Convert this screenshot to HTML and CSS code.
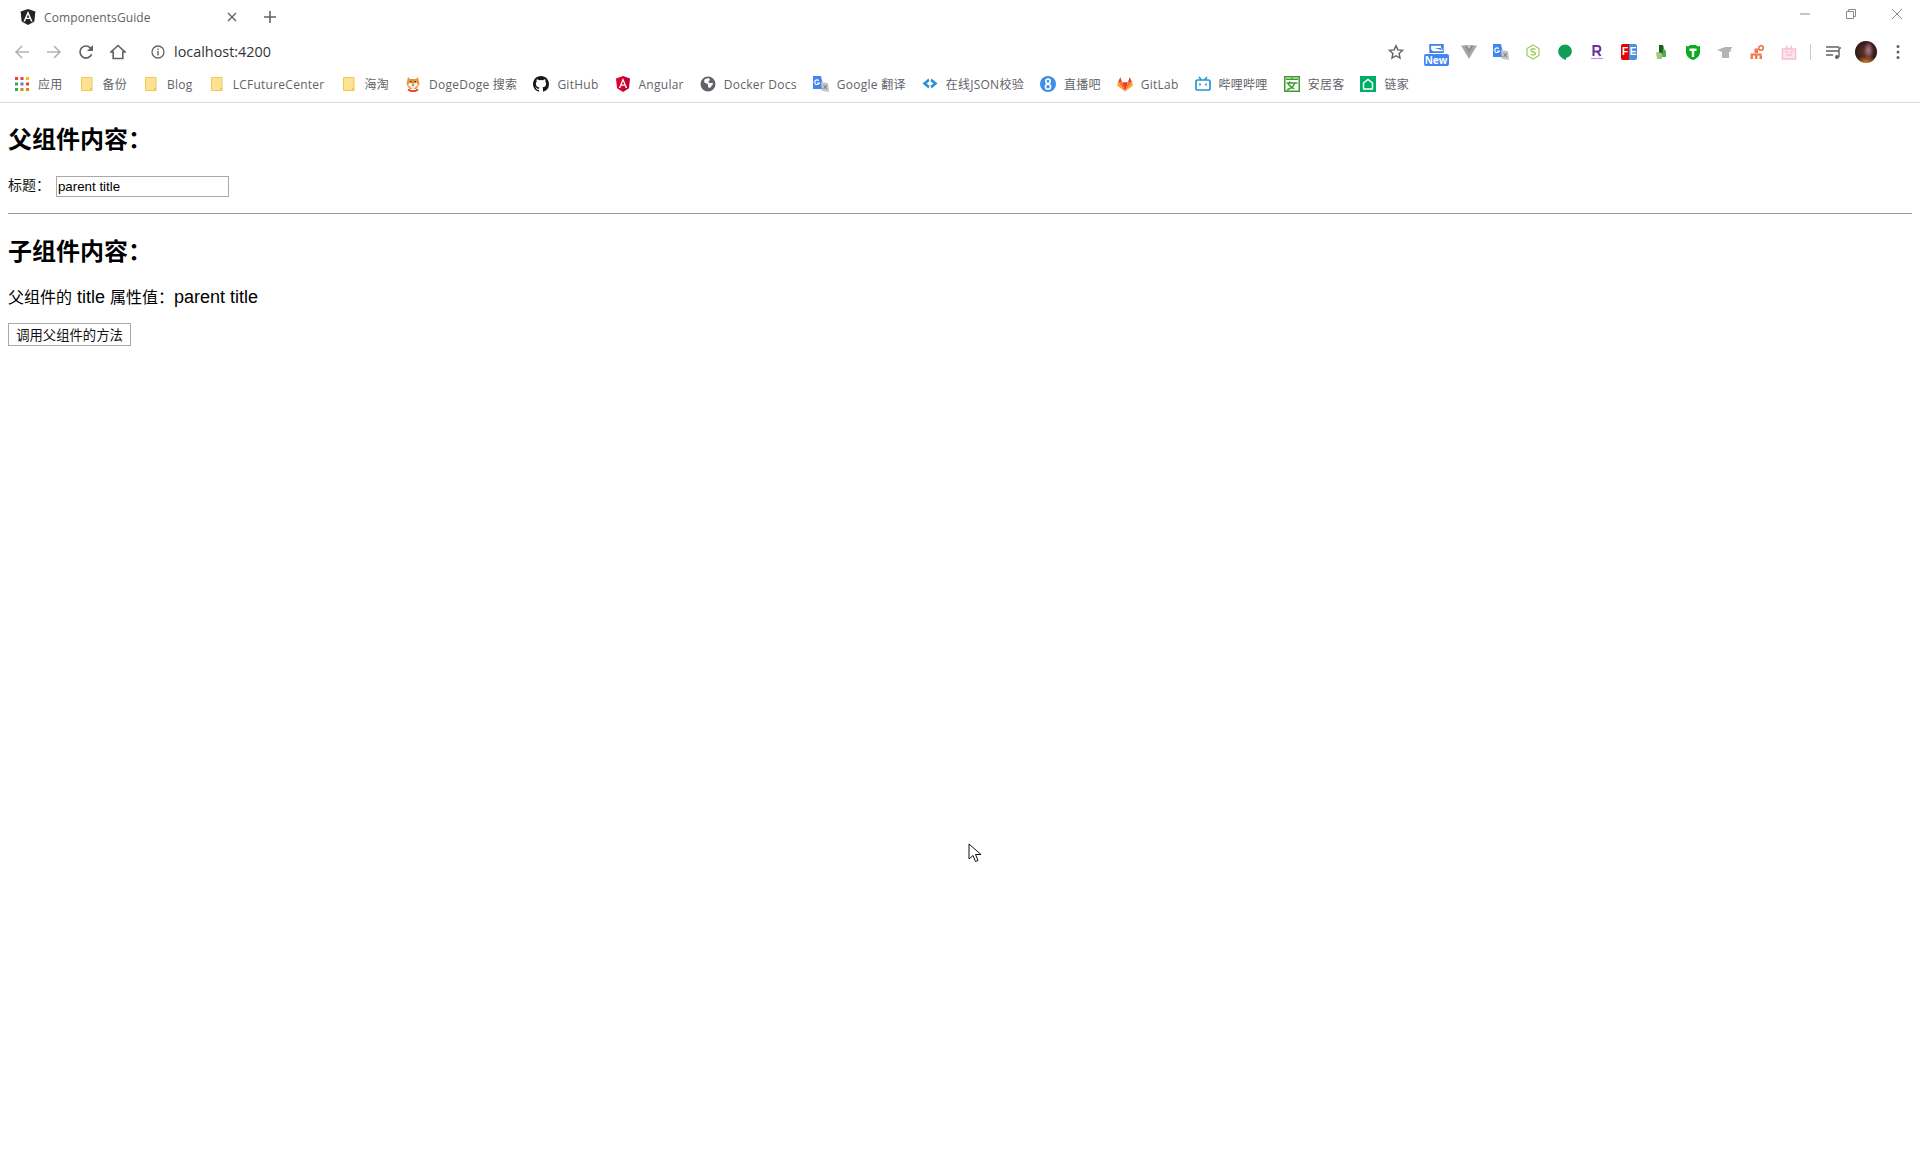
FILE: index.html
```html
<!DOCTYPE html>
<html lang="zh">
<head>
<meta charset="utf-8">
<title>ComponentsGuide</title>
<link rel="stylesheet" href="styles.css">
</head>
<body>
<header class="chrome">
  <div class="tabstrip">
    <div class="tab">
      <svg class="fav" viewBox="0 0 16 16"><path fill="#212327" d="M8 0 .6 2.600l1.100 9.800L8 16l6.300-3.600 1.100-9.800z"/><path fill="#fff" d="M8 2 3.400 12.400h1.700l.9-2.300h4l.9 2.300h1.700zm-1.300 6.700L8 5.500l1.300 3.200z"/></svg>
      <span class="tab-title">ComponentsGuide</span>
      <svg class="tab-close" viewBox="0 0 10 10"><path d="m1 1 8 8M9 1 1 9" stroke="#5f6368" stroke-width="1.400" fill="none"/></svg>
    </div>
    <svg class="newtab" viewBox="0 0 12 12"><path d="M6 0v12M0 6h12" stroke="#5f6368" stroke-width="1.600"/></svg>
    <div class="win">
      <svg viewBox="0 0 10 10"><path d="M0 5h10" stroke="#8a8a8a"/></svg>
      <svg viewBox="0 0 10 10"><path d="M.5 2.500h7v7h-7zM2.500 2.500v-2h7v7h-2" stroke="#8a8a8a" fill="none"/></svg>
      <svg viewBox="0 0 10 10"><path d="m0 0 10 10M10 0 0 10" stroke="#8a8a8a" fill="none"/></svg>
    </div>
  </div>
  <div class="omnibar">
    <svg class="nav" viewBox="0 0 16 16"><path d="M15 8H2M8 2 2 8l6 6" stroke="#b1b3b6" stroke-width="1.600" fill="none"/></svg>
    <svg class="nav" viewBox="0 0 16 16"><path d="M1 8h13M8 2l6 6-6 6" stroke="#b1b3b6" stroke-width="1.600" fill="none"/></svg>
    <svg class="nav" viewBox="0 0 16 16"><path d="M13.600 10.200A6 6 0 1 1 12.300 3.800L14.500 6" stroke="#5f6368" stroke-width="1.700" fill="none"/><path d="M15 1v6H9z" fill="#5f6368"/></svg>
    <svg class="nav" viewBox="0 0 16 16"><path d="M8 1.500 1 8h2.200v6.500h9.600V8H15z" stroke="#5f6368" stroke-width="1.600" fill="none"/></svg>
    <svg class="info" viewBox="0 0 14 14"><circle cx="7" cy="7" r="6" stroke="#5f6368" stroke-width="1.300" fill="none"/><path d="M7 6v4.500M7 3.500v1.500" stroke="#5f6368" stroke-width="1.400"/></svg>
    <span class="url">localhost:4200</span>
    <div class="ext-row">
      <svg class="star" viewBox="0 0 16 16"><path d="m8 1.700 1.900 4.200 4.600.5-3.400 3.100.9 4.500-4-2.300-4 2.300.9-4.500-3.400-3.100 4.600-.5z" stroke="#5f6368" stroke-width="1.400" fill="none"/></svg>
      <span class="ext-new"><svg class="ext-new-top" viewBox="0 0 16 10"><path fill="#3d82e0" d="M0 0h16v10H0z"/><path fill="#fff" d="M2 2h11v1.500L15 7v1H4L2 6z"/><path fill="#3d82e0" d="M6 4.500h7l1 2.500z"/></svg><span class="ext-new-label">New</span></span>
      <svg class="ext" viewBox="0 0 16 16"><path fill="#a6a6a6" d="M0 1.500h16L8 15z"/><path fill="#8c8c8c" d="M3.500 1.500h9L8 9z"/><path fill="#cfcfcf" d="M6 1.500h4L8 5z"/></svg>
      <svg class="ext" viewBox="0 0 16 16"><use href="#gt"/></svg>
      <svg class="ext" viewBox="0 0 16 16"><path d="M8 1 14 4.500v7L8 15l-6-3.500v-7z" stroke="#9ccc65" stroke-width="1.200" fill="#fdfff8"/><path d="M10.500 5.500C9 4.600 6 4.700 6 6.300c0 2 4.500 1.200 4.500 3.300 0 1.600-3 1.700-4.500.8" stroke="#8bc34a" stroke-width="1.200" fill="none"/></svg>
      <svg class="ext" viewBox="0 0 16 16"><path fill="#0f9d58" d="M8 .5a6.800 6.800 0 0 1 6.800 6.800c0 3.400-2.500 6-5.800 6.600V16C5 15 1.200 11.500 1.200 7.300A6.800 6.800 0 0 1 8 .5z"/></svg>
      <svg class="ext" viewBox="0 0 16 16"><path d="M4.500 12V2h4a2.800 2.800 0 0 1 0 5.600h-4M8.500 7.600l3 4.400" stroke="#6a2c9e" stroke-width="2" fill="none"/><path d="M2 14.500h12" stroke="#b99ad6" stroke-width="1.200"/></svg>
      <span class="ext-fe"><span class="ext-fe-f">F</span><span class="ext-fe-e">E</span></span>
      <svg class="ext" viewBox="0 0 16 16"><path fill="#1b5e20" d="M6 1h4l1 4v6H6z"/><path fill="#4caf50" d="M10 4l3 3v6H9z"/><path fill="#a5c77a" d="M3 8l6 1v6H4z"/></svg>
      <svg class="ext" viewBox="0 0 16 16"><path fill="#0bab1e" d="M1 2c2 .5 3 .5 4-1h6c1 1.500 2 1.500 4 1v6c0 4-3 6.500-7 8-4-1.500-7-4-7-8z"/><path fill="#fff" d="M4.500 4.500h7V7H9.200v6H6.800V7H4.500z"/></svg>
      <svg class="ext" viewBox="0 0 16 16"><path fill="#b4b4b4" d="M0 6 8 3h7v1l-2 2 2 1-3 1v6H5V8z"/></svg>
      <svg class="ext" viewBox="0 0 16 16"><circle cx="12" cy="4" r="2.300" stroke="#ea5a2c" stroke-width="1.300" fill="none"/><path fill="#f07a4a" d="M5.500 4.500h3.500v4.500H5.500zM1.500 9.500h11v2h-11zM1.500 11.500h2.500v3.500H1.500zM6 11.500h2.500v3.500H6zM10.500 11.500H13v3.500h-2.500z"/></svg>
      <svg class="ext" viewBox="0 0 16 16"><path d="M1.500 5h13v10h-13zM5 1.500 7 5M11 1.500 9 5" stroke="#f7bccb" stroke-width="1.400" fill="#fde7ec"/><path d="M4 8h3M9 8h3M5 11h6" stroke="#f7bccb" stroke-width="1.400"/></svg>
      <span class="sep"></span>
      <svg class="media" viewBox="0 0 16 14"><path d="M0 2h13M0 6h13M0 10h7" stroke="#5f6368" stroke-width="1.500"/><circle cx="11" cy="12" r="2" fill="#5f6368"/><path d="M13 12V3h2" stroke="#5f6368" stroke-width="1.400" fill="none"/></svg>
      <span class="avatar"></span>
      <svg class="more" viewBox="0 0 4 16"><circle cx="2" cy="2.500" r="1.500" fill="#5f6368"/><circle cx="2" cy="8" r="1.500" fill="#5f6368"/><circle cx="2" cy="13.500" r="1.500" fill="#5f6368"/></svg>
    </div>
  </div>
  <nav class="bookmarks">
    <a class="bm"><svg class="bm-icon" viewBox="-1 -1 16 16"><path fill="#ea4335" d="M0 0h3v3H0zM5.500 0h3v3h-3z"/><path fill="#fbbc05" d="M11 0h3v3h-3z"/><path fill="#34a853" d="M0 5.500h3v3H0z"/><path fill="#4285f4" d="M5.500 5.500h3v3h-3z"/><path fill="#ea4335" d="M11 5.500h3v3h-3z"/><path fill="#34a853" d="M0 11h3v3H0z"/><path fill="#d98c00" d="M5.500 11h3v3h-3zM11 11h3v3h-3z"/></svg>应用</a>
    <a class="bm"><svg class="bm-icon" viewBox="0 0 16 16"><use href="#folder"/></svg>备份</a>
    <a class="bm"><svg class="bm-icon" viewBox="0 0 16 16"><use href="#folder"/></svg>Blog</a>
    <a class="bm"><svg class="bm-icon" viewBox="0 0 16 16"><use href="#folder"/></svg>LCFutureCenter</a>
    <a class="bm"><svg class="bm-icon" viewBox="0 0 16 16"><use href="#folder"/></svg>海淘</a>
    <a class="bm"><svg class="bm-icon" viewBox="0 0 16 16"><path fill="#e8963c" d="M3 1l2 2h6l2-2 1.500 7-3 5h-7l-3-5z"/><path fill="#fff3e0" d="M4.500 6.500 8 8l3.500-1.500L13 9l-5 4.500L3 9z"/><path fill="#222" d="M5.200 5h1.300v1.300H5.200zM9.500 5h1.300v1.300H9.500zM7.300 8.500h1.400v1.200H7.300z"/><path stroke="#e33" stroke-width="1.800" d="M3 13.500c3 2 7 2 10 0" fill="none"/></svg>DogeDoge 搜索</a>
    <a class="bm"><svg class="bm-icon" viewBox="0 0 16 16"><path fill="#181717" d="M8 0C3.580 0 0 3.580 0 8c0 3.540 2.290 6.530 5.470 7.590.4.070.55-.17.550-.38v-1.340c-2.230.48-2.700-1.070-2.700-1.070-.36-.92-.89-1.170-.89-1.170-.73-.5.050-.49.050-.49.800.06 1.230.82 1.230.82.710 1.220 1.870.87 2.330.66.070-.52.280-.87.510-1.070-1.780-.2-3.640-.89-3.640-3.950 0-.87.310-1.590.82-2.150-.08-.2-.36-1.020.08-2.120 0 0 .67-.21 2.200.82a7.600 7.600 0 0 1 4 0c1.530-1.040 2.200-.82 2.200-.82.440 1.100.16 1.920.08 2.120.51.560.82 1.270.82 2.150 0 3.070-1.870 3.750-3.650 3.950.29.250.54.730.54 1.480v2.200c0 .21.150.46.550.38A8 8 0 0 0 16 8c0-4.420-3.580-8-8-8z"/></svg>GitHub</a>
    <a class="bm"><svg class="bm-icon" viewBox="0 0 16 16"><path fill="#dd0031" d="M8 0 1 2.500l1 9.700L8 16z"/><path fill="#c3002f" d="m8 0 7 2.500-1 9.700L8 16z"/><path fill="#fff" d="M8 2 3.800 12h1.600l.8-2.200h3.600l.8 2.200h1.600zm-1.300 6.500L8 5.300l1.300 3.200z"/></svg>Angular</a>
    <a class="bm"><svg class="bm-icon" viewBox="0 0 16 16"><circle cx="8" cy="8" r="7.500" fill="#5f6368"/><path fill="#fff" d="M5 3l4-1 1 2-2 2 2 1 3 0 0 1-3 4-2-1 0-3-3-1-1-2z"/></svg>Docker Docs</a>
    <a class="bm"><svg class="bm-icon" viewBox="0 0 16 16"><use href="#gt"/></svg>Google 翻译</a>
    <a class="bm"><svg class="bm-icon" viewBox="0 0 16 16"><path d="M6.500 2.500.5 7.500l6 5 1-2.800-3-2.200 3-2.200zM9.500 2.500l6 5-6 5-1-2.800 3-2.200-3-2.200z" fill="#2d8fd5"/></svg>在线JSON校验</a>
    <a class="bm"><svg class="bm-icon" viewBox="0 0 16 16"><circle cx="8" cy="8" r="8" fill="#3d8fe8"/><circle cx="8" cy="5.300" r="2.200" stroke="#fff" stroke-width="1.600" fill="none"/><circle cx="8" cy="10.700" r="2.500" stroke="#fff" stroke-width="1.600" fill="none"/></svg>直播吧</a>
    <a class="bm"><svg class="bm-icon" viewBox="0 0 16 16"><path fill="#e24329" d="m8 15.500-3-9.300h6z"/><path fill="#fc6d26" d="M8 15.500 5 6.200H1z"/><path fill="#fca326" d="M1 6.200.1 9c-.1.300 0 .6.200.7L8 15.500z"/><path fill="#e24329" d="M1 6.200h4L3.300 1z"/><path fill="#fc6d26" d="M8 15.500l3-9.300h4z"/><path fill="#fca326" d="m15 6.200.9 2.800c.1.300 0 .6-.2.700L8 15.500z"/><path fill="#e24329" d="M15 6.200h-4L12.700 1z"/></svg>GitLab</a>
    <a class="bm"><svg class="bm-icon" viewBox="0 0 16 16"><path d="M1 5.500a1.500 1.500 0 0 1 1.500-1.500h11A1.500 1.500 0 0 1 15 5.500v7a1.500 1.500 0 0 1-1.500 1.500h-11A1.500 1.500 0 0 1 1 12.500z" stroke="#2a94d6" stroke-width="1.700" fill="none"/><path d="M4 1l2.500 3M12 1 9.500 4M5 7.500v2M11 7.500v2" stroke="#2a94d6" stroke-width="1.700"/></svg>哔哩哔哩</a>
    <a class="bm"><svg class="bm-icon" viewBox="0 0 16 16"><path fill="#3c9b2c" d="M0 0h16v16H0z"/><path fill="#fff" d="M1.500 1.500h13v13h-13z"/><path d="M2 3.200h12M8 1.500v2M2.500 7h11M6 5.500 4.500 8.500 10 13M10.500 7.500 8.500 11 3 14" stroke="#3c9b2c" stroke-width="1.500" fill="none"/></svg>安居客</a>
    <a class="bm"><svg class="bm-icon" viewBox="0 0 16 16"><path fill="#00ae66" d="M0 0h16v16H0z"/><path d="M3.500 12.500V7L8 3.500 12.500 7v5.500" stroke="#fff" stroke-width="1.500" fill="none"/><path d="M3 13h10" stroke="#fff" stroke-width="1.500"/></svg>链家</a>
  </nav>
  <svg class="defs" viewBox="0 0 16 16">
    <defs>
      <g id="folder"><path fill="#fde293" stroke="#f2c84b" stroke-width="1" d="M2.500 1.500h10.500v13H2.500z"/><path fill="#f2c84b" d="M11 12h2v2h-2z"/></g>
      <g id="gt"><path fill="#4285f4" d="M0 0h8l3 14-4-1H0z"/><path fill="none" stroke="#fff" stroke-width="1.200" d="M5.800 4.700A2.300 2.300 0 1 0 6.200 7H4.200"/><path fill="#c5c5c5" d="m8 6 7 1 1 9-7-1z"/><path d="m10.500 9 3.500 4m0-4-3.500 4" stroke="#777"/></g>
    </defs>
  </svg>
</header>
<main class="page">
  <h2 class="heading">父组件内容：</h2>
  <p class="field">标题： <input class="title-input" type="text" value="parent title"></p>
  <hr class="rule">
  <h2 class="heading heading-child">子组件内容：</h2>
  <p class="value">父组件的<span class="latin"> title </span>属性值：<span class="latin">parent title</span></p>
  <button class="call" type="button">调用父组件的方法</button>
</main>
<svg class="cursor" viewBox="0 0 14 20"><path d="M1 1v15l4-3.500 2.500 6 2.500-1-2.500-6H13z" fill="#fff" stroke="#111" stroke-width="1"/></svg>
</body>
</html>
```
FILE: styles.css
```css
* { box-sizing: border-box; }
html, body { margin: 0; background: #fff; }
body { width: 1920px; height: 1160px; overflow: hidden; position: relative; font-family: "Liberation Sans", "Noto Sans CJK SC", sans-serif; color: #000; }

.chrome { height: 103px; border-bottom: 1px solid #dadce0; font-family: "Open Sans", "Noto Sans CJK SC", sans-serif; }
.defs { display: none; }

.tabstrip { height: 34px; display: flex; align-items: flex-start; }
.tab { display: flex; align-items: center; width: 240px; height: 35px; padding-left: 20px; }
.fav { width: 16px; height: 16px; flex: none; margin-top: -2px; }
.tab-title { margin-left: 8px; font-size: 12px; color: #5f6368; margin-top: -1px; flex: 1; letter-spacing: .1px; }
.tab-close { width: 10px; height: 10px; margin-right: 3px; margin-top: -2px; }
.newtab { width: 12px; height: 12px; margin: 11px 0 0 24px; }
.win { margin-left: auto; display: flex; gap: 36px; padding: 9px 18px 0 0; }
.win svg { width: 10px; height: 10px; }

.omnibar { height: 35px; display: flex; align-items: center; padding-left: 14px; }
.nav { width: 16px; height: 16px; margin-right: 16px; flex: none; }
.info { width: 14px; height: 14px; margin-left: 9px; flex: none; }
.url { margin-left: 9px; font-size: 14.4px; color: #333; }
.ext-row { margin-left: auto; display: flex; align-items: center; }
.star { width: 16px; height: 16px; margin-right: 19px; }
.ext-new { width: 26px; height: 22px; display: flex; flex-direction: column; align-items: center; margin-right: 12px; margin-top: 6px; }
.ext-new-top { width: 15px; height: 9px; flex: none; }
.ext-new-label { background: #4285f4; color: #fff; font-size: 10px; font-weight: 700; line-height: 12px; width: 25px; text-align: center; border-radius: 2px; margin-top: 1px; }
.ext { width: 16px; height: 16px; margin-right: 16px; flex: none; }
.ext-fe { width: 16px; height: 16px; margin-right: 16px; display: flex; font: 700 10px/16px "Liberation Sans", sans-serif; color: #fff; border-radius: 2px; overflow: hidden; }
.ext-fe-f { background: #e60000; width: 8px; text-align: center; }
.ext-fe-e { background: #4a90e2; width: 8px; text-align: center; }
.sep { width: 1px; height: 16px; background: #c8c9cb; margin: 0 15px 0 -3px; }
.media { width: 16px; height: 14px; margin-right: 13px; }
.avatar { width: 22px; height: 22px; border-radius: 50%; background: radial-gradient(ellipse 5px 9px at 62% 42%, #b07a8a 0, transparent 100%), radial-gradient(ellipse 12px 6px at 50% 95%, #c87a2a 0, transparent 100%), radial-gradient(circle at 50% 50%, #6b3a34 0, #2a1510 75%); margin-right: 19px; }
.more { width: 4px; height: 16px; margin-right: 20px; }

.bookmarks { height: 34px; display: flex; align-items: center; padding: 0 0 4px 14px; gap: 16px; font-size: 12px; color: #5f6368; white-space: nowrap; letter-spacing: .26px; }
.bm { display: flex; align-items: center; gap: 8px; }
.bm-icon { width: 16px; height: 16px; flex: none; }

.page { padding: 0 8px; }
.heading { font-size: 24px; line-height: 28px; font-weight: 700; margin: 0; padding-top: 23px; }
.heading-child { padding-top: 24px; }
.field { font-size: 14px; margin: 21px 0 0; line-height: 20px; color: #111; }
.title-input { width: 173px; height: 21px; border: 1px solid #a9a9a9; padding: 1px 1px; font: 13.333px "Liberation Sans", sans-serif; margin: 0 0 0 2px; vertical-align: middle; }
.rule { margin: 16px 0 0; border: 0; border-top: 1px solid #999; height: 0; }
.value { font-size: 16px; line-height: 22px; margin: 20px 0 0; }
.latin { font-size: 18px; }
.call { display: block; margin: 14px 0 0; height: 23px; width: 123px; padding: 0; border: 1px solid #a9a9a9; background: #fff; font: 13.333px "Liberation Sans", "Noto Sans CJK SC", sans-serif; color: #111; }

.cursor { position: absolute; left: 968px; top: 843px; width: 14px; height: 20px; }
```
